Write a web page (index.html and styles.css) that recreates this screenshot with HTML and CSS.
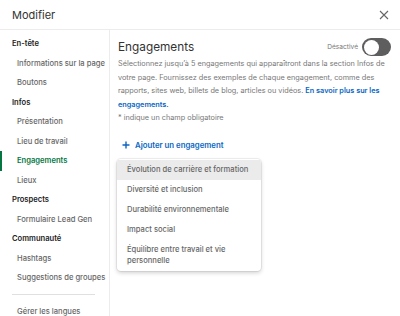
FILE: index.html
```
<!DOCTYPE html>
<html lang="fr">
<head>
<meta charset="utf-8">
<title>Modifier</title>
<link rel="stylesheet" href="styles.css">
</head>
<body>
<div class="modal">
  <header class="modal-header">
    <h1 class="modal-title">Modifier</h1>
    <button class="close" aria-label="Fermer">
      <svg width="10" height="10" viewBox="0 0 10 10"><path d="M1 1L9 9M9 1L1 9" stroke="#666" stroke-width="1.1" fill="none"/></svg>
    </button>
  </header>
  <div class="modal-body">
    <nav class="sidebar">
      <div class="nav-head">En-tête</div>
      <div class="nav-item">Informations sur la page</div>
      <div class="nav-item">Boutons</div>
      <div class="nav-head">Infos</div>
      <div class="nav-item">Présentation</div>
      <div class="nav-item">Lieu de travail</div>
      <div class="nav-item active">Engagements</div>
      <div class="nav-item">Lieux</div>
      <div class="nav-head">Prospects</div>
      <div class="nav-item">Formulaire Lead Gen</div>
      <div class="nav-head">Communauté</div>
      <div class="nav-item">Hashtags</div>
      <div class="nav-item">Suggestions de groupes</div>
      <hr class="nav-divider">
      <div class="nav-item">Gérer les langues</div>
    </nav>
    <main class="content">
      <div class="content-head">
        <h2 class="content-title">Engagements</h2>
        <div class="toggle-wrap">
          <span class="toggle-label">Désactivé</span>
          <span class="toggle"><span class="knob"></span></span>
        </div>
      </div>
      <p class="desc">Sélectionnez jusqu’à 5 engagements qui apparaîtront dans la section Infos de votre page. Fournissez des exemples de chaque engagement, comme des rapports, sites web, billets de blog, articles ou vidéos. <a class="link" href="#">En savoir plus sur les engagements.</a></p>
      <p class="required">* indique un champ obligatoire</p>
      <button class="add">
        <svg width="8" height="8" viewBox="0 0 8 8"><path d="M4 0.5V7.5M0.5 4H7.5" stroke="#0a66c2" stroke-width="1.4" fill="none"/></svg>
        <span>Ajouter un engagement</span>
      </button>
      <ul class="menu">
        <li class="menu-item hover">Évolution de carrière et formation</li>
        <li class="menu-item">Diversité et inclusion</li>
        <li class="menu-item">Durabilité environnementale</li>
        <li class="menu-item">Impact social</li>
        <li class="menu-item multi">Équilibre entre travail et vie personnelle</li>
      </ul>
    </main>
  </div>
</div>
</body>
</html>
```
FILE: styles.css
```
* { box-sizing: border-box; }
html, body { margin: 0; padding: 0; background: #fff; }
body {
  font-family: Inter, "Noto Sans", "Liberation Sans", sans-serif;
  width: 400px;
  height: 316px;
  overflow: hidden;
}
.modal { width: 400px; height: 316px; display: flex; flex-direction: column; }
.modal-header {
  height: 30px;
  flex: none;
  display: flex;
  align-items: center;
  justify-content: space-between;
  padding: 0 11px 0 12px;
  border-bottom: 1px solid #ececec;
}
.modal-title { margin: 0; font-size: 11px; font-weight: 400; color: #333; }
.close { border: 0; background: none; padding: 0; display: flex; }
.modal-body { flex: 1; display: flex; min-height: 0; }
.sidebar {
  width: 110px;
  flex: none;
  border-right: 1px solid #ececec;
  padding-top: 4px;
}
.nav-head, .nav-item {
  height: 19.5px;
  line-height: 19.5px;
  font-size: 7.6px;
  white-space: nowrap;
}
.nav-head { padding-left: 12px; font-weight: 600; color: #222; }
.nav-item { padding-left: 17px; font-weight: 500; color: #666; }
.nav-item.active { color: #057642; font-weight: 600; box-shadow: inset 2px 0 0 #057642; }
.nav-divider { border: 0; border-top: 1px solid #e0e0e0; margin: 6px 14px 7px 12px; }
.content { flex: 1; padding: 7px 9px 0 8px; }
.content-head { display: flex; align-items: center; justify-content: space-between; height: 20px; }
.content-title { margin: 0; font-size: 11.8px; font-weight: 400; color: #333; }
.toggle-wrap { display: flex; align-items: center; gap: 4px; }
.toggle-label { font-size: 6.6px; color: #777; }
.toggle {
  width: 29px; height: 18px; border-radius: 9px; background: #5e5e5e;
  display: flex; align-items: center; padding: 0 1.5px;
}
.knob { width: 15px; height: 15px; border-radius: 50%; background: #fff; }
.desc {
  margin: 0;
  font-size: 7.3px;
  line-height: 13.6px;
  color: #777;
}
.link { color: #0a66c2; font-weight: 600; text-decoration: none; }
.required { margin: 0; font-size: 7.3px; line-height: 14px; color: #777; }
.add {
  margin-top: 10px;
  height: 20px;
  border: 0; background: none;
  display: flex; align-items: center; gap: 5px;
  padding: 0 0 0 4px;
  font-family: inherit;
  font-size: 7.8px; font-weight: 600; color: #0a66c2;
}
.menu {
  list-style: none;
  margin: 4px 0 0 -1px;
  padding: 1px 0 0;
  width: 144px;
  border-radius: 4px;
  background: #fff;
  box-shadow: 0 0 0 1px rgba(0,0,0,0.06), 0 2px 4px rgba(0,0,0,0.18);
  overflow: hidden;
}
.menu-item {
  height: 20px;
  line-height: 20px;
  padding: 0 8px 0 10px;
  font-size: 7.6px;
  font-weight: 500;
  color: #666;
  white-space: nowrap;
}
.menu-item.hover { background: #ebebeb; }
.menu-item.multi { height: auto; white-space: normal; line-height: 11px; padding-top: 4px; padding-bottom: 5px; }
```
